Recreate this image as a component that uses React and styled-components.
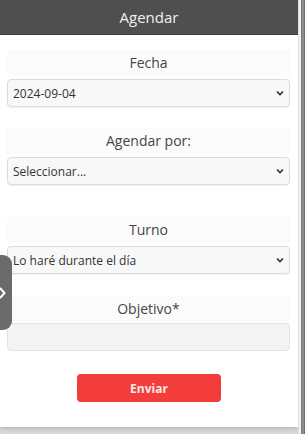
import styled, { createGlobalStyle } from "styled-components";

const GlobalStyle = createGlobalStyle`
  html, body {
    margin: 0;
    padding: 0;
    background: #d9d9d9;
    font-family: "Open Sans", "Liberation Sans", sans-serif;
  }
`;

const Page = styled.div`
  position: relative;
  display: flex;
  flex-direction: row;
  width: 305px;
  height: 434px;
  overflow: hidden;
`;

const Card = styled.div`
  display: flex;
  flex-direction: column;
  width: 298px;
  height: 427px;
  background: #ffffff;
  box-shadow: 0 2px 4px rgba(0, 0, 0, 0.15);
`;

const Edge = styled.div`
  width: 7px;
  height: 434px;
  background: #f2f2f2;
  border-left: 1px solid #e0e0e0;
  box-sizing: border-box;
  display: flex;
  justify-content: flex-end;

  &::after {
    content: "";
    width: 4px;
    background: linear-gradient(to right, #6e6e6e, #9a9a9a, #5e5e5e);
  }
`;

const Header = styled.header`
  height: 35px;
  background: #4f4f4f;
  border-bottom: 1px solid #3c3c3c;
  box-sizing: border-box;
  display: flex;
  align-items: center;
  justify-content: center;
  color: #f0f0f0;
  font-size: 15px;
`;

const Form = styled.form`
  display: flex;
  flex-direction: column;
  padding: 15px 8px 0 7px;
`;

const Field = styled.div`
  display: flex;
  flex-direction: column;
  gap: ${(props) => props.$gap ?? 3}px;
  margin-bottom: ${(props) => props.$after ?? 22}px;
`;

const Label = styled.label`
  height: 26px;
  line-height: 26px;
  text-align: center;
  font-size: 14px;
  color: #454545;
  background: #fbfbfb;
`;

const Select = styled.select`
  appearance: none;
  height: 28px;
  width: 100%;
  padding: 0 20px 0 5px;
  font-family: "Open Sans", "Liberation Sans", sans-serif;
  font-size: 12px;
  color: #333;
  background-color: #f8f8f8;
  background-image: url("data:image/svg+xml,%3Csvg xmlns='http://www.w3.org/2000/svg' width='8' height='6' viewBox='0 0 8 6'%3E%3Cpath d='M1 1.5l3 3 3-3' fill='none' stroke='%23333' stroke-width='1.6'/%3E%3C/svg%3E");
  background-repeat: no-repeat;
  background-position: right 5px center;
  border: 1px solid #dcdcdc;
  border-radius: 4px;
  box-shadow: 0 1px 1px rgba(0, 0, 0, 0.06);
`;

const Input = styled.input`
  height: 28px;
  width: 100%;
  box-sizing: border-box;
  background: #f4f4f4;
  border: 1px solid #e2e2e2;
  border-radius: 4px;
`;

const SubmitButton = styled.button`
  align-self: center;
  width: 144px;
  height: 28px;
  margin-left: 1px;
  background: #f23d3a;
  border: none;
  border-radius: 4px;
  color: #fbeaea;
  font-family: "Open Sans", "Liberation Sans", sans-serif;
  font-weight: 700;
  font-size: 12px;
`;

const SideTab = styled.div`
  position: absolute;
  left: 0;
  top: 255px;
  width: 12px;
  height: 75px;
  background: #6b6b6b;
  border-radius: 0 9px 9px 0;
  display: flex;
  align-items: center;
`;

const App = () => {
  return (
    <>
      <GlobalStyle />
      <Page>
        <Card>
          <Header>Agendar</Header>
          <Form onSubmit={(e) => e.preventDefault()}>
            <Field $after={21}>
              <Label>Fecha</Label>
              <Select defaultValue="2024-09-04">
                <option>2024-09-04</option>
              </Select>
            </Field>
            <Field $after={32}>
              <Label>Agendar por:</Label>
              <Select defaultValue="">
                <option value="">Seleccionar...</option>
              </Select>
            </Field>
            <Field $after={22}>
              <Label>Turno</Label>
              <Select>
                <option>Lo haré durante el día</option>
              </Select>
            </Field>
            <Field $gap={1} $after={23}>
              <Label>Objetivo*</Label>
              <Input type="text" />
            </Field>
            <SubmitButton type="submit">Enviar</SubmitButton>
          </Form>
        </Card>
        <Edge />
        <SideTab>
          <svg width="6" height="12" viewBox="0 0 6 12">
            <path d="M0 1l4.5 5L0 11" fill="none" stroke="#fff" strokeWidth="2" />
          </svg>
        </SideTab>
      </Page>
    </>
  );
};

export default App;
